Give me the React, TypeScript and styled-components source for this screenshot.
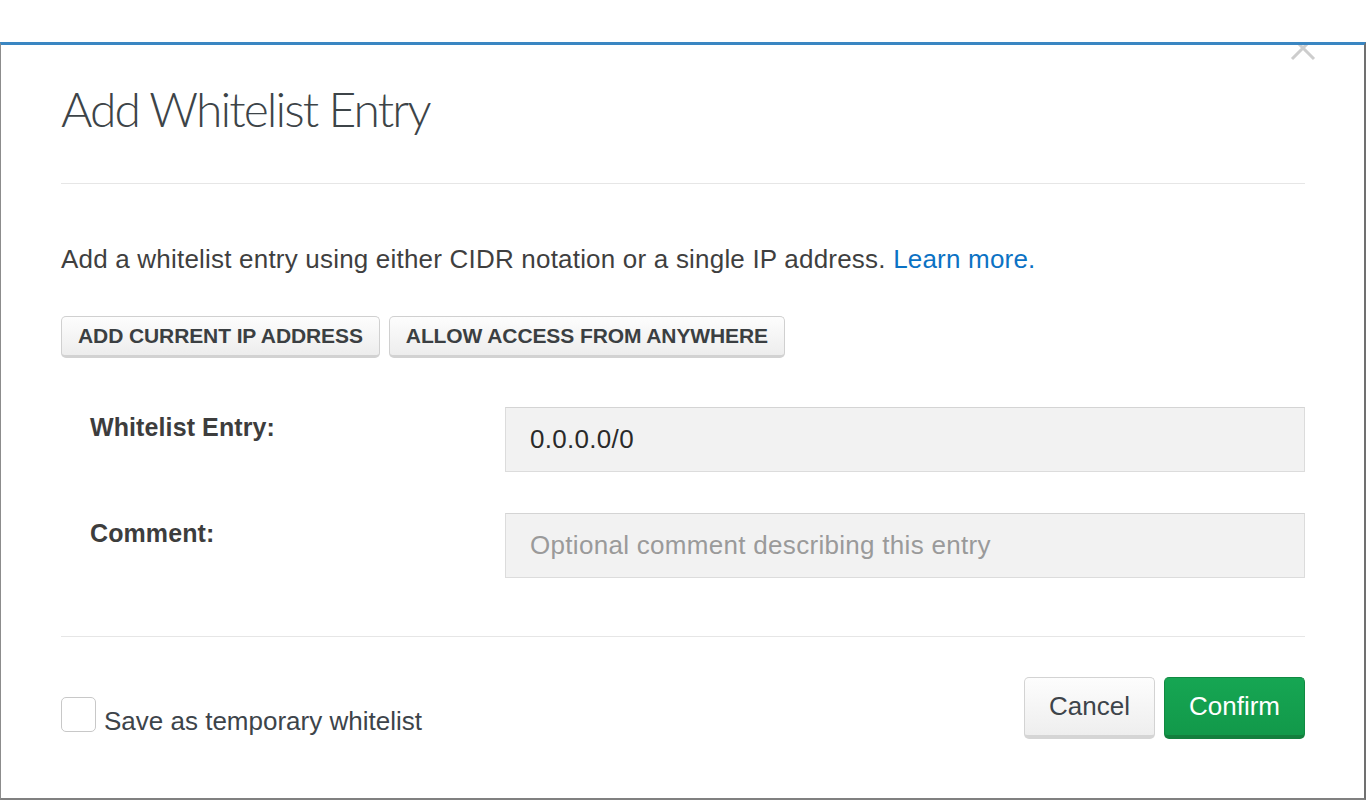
import React, { useState } from 'react'
import styled, { createGlobalStyle } from 'styled-components'

const GlobalStyle = createGlobalStyle`
  html, body {
    margin: 0;
    padding: 0;
    background: #ffffff;
  }
  body {
    font-family: "Liberation Sans", Arial, sans-serif;
    color: #333;
  }
  * {
    box-sizing: border-box;
  }
`

const Page = styled.div`
  width: 1366px;
  height: 801px;
  overflow: hidden;
  padding-top: 42px;
  background: #ffffff;
`

const Modal = styled.div`
  position: relative;
  height: 758px;
  background: #fff;
  border-top: 3px solid #3a86c2;
  border-left: 1px solid #8c8c8c;
  border-right: 2px solid #707070;
  border-bottom: 2px solid #808080;
  padding: 0 59px 0 60px;
  overflow: hidden;
`

const CloseButton = styled.button`
  position: absolute;
  top: -10px;
  right: 48px;
  width: 26px;
  height: 26px;
  padding: 0;
  border: none;
  background: transparent;
  cursor: pointer;
`

const Header = styled.div`
  padding-top: 34px;
  height: 139px;
  border-bottom: 1px solid #e6e6e6;
`

const Title = styled.h2`
  margin: 0;
  font-family: "Lato", "Liberation Sans", sans-serif;
  font-weight: 300;
  font-size: 48px;
  line-height: 60px;
  color: #3d4448;
  letter-spacing: -1.9px;
`

const Body = styled.div`
  padding-top: 59px;
  height: 453px;
  border-bottom: 1px solid #e6e6e6;
`

const Intro = styled.p`
  margin: 0;
  font-size: 26px;
  line-height: 32px;
  color: #3f3f3f;
  letter-spacing: 0.2px;
`

const Link = styled.a`
  color: #0b72c4;
  text-decoration: none;
`

const ButtonRow = styled.div`
  display: flex;
  gap: 9px;
  margin-top: 41px;
`

const PresetButton = styled.button`
  height: 42px;
  padding: 0 16px;
  font-family: "Liberation Sans", Arial, sans-serif;
  font-weight: 700;
  font-size: 21px;
  letter-spacing: -0.1px;
  color: #3b3f42;
  text-transform: uppercase;
  background: linear-gradient(#fdfdfd, #ededed);
  border: 1px solid #d0d0d0;
  border-bottom: 3px solid #d2d2d2;
  border-radius: 5px;
  cursor: pointer;
`

const FormRow = styled.div<{ $first?: boolean }>`
  display: flex;
  align-items: flex-start;
  margin-top: ${p => p.$first ? '49px' : '41px'};
`

const Label = styled.label`
  width: 444px;
  padding: 4px 0 0 29px;
  font-weight: 700;
  font-size: 25px;
  line-height: 32px;
  color: #3d3d3d;
  letter-spacing: 0.1px;
`

const TextInput = styled.input`
  flex: 1;
  height: 65px;
  padding: 0 24px;
  font-family: "Liberation Sans", Arial, sans-serif;
  font-size: 26px;
  letter-spacing: 0.3px;
  color: #2a2a2a;
  background: #f2f2f2;
  border: 1px solid #dcdcdc;
  border-top-color: #d4d4d4;
  border-radius: 0;
  outline: none;
  &::placeholder {
    color: #9a9a9a;
  }
`

const Footer = styled.div`
  display: flex;
  align-items: center;
  justify-content: space-between;
  padding-top: 40px;
`

const CheckLabel = styled.label`
  display: flex;
  align-items: flex-end;
  gap: 8px;
  padding-top: 18px;
  font-size: 26px;
  color: #3d444a;
  cursor: pointer;
`

const Box = styled.span<{ $on: boolean }>`
  width: 35px;
  height: 35px;
  border: 1px solid #c8c8c8;
  border-radius: 5px;
  background: ${p => p.$on ? '#3a86c2' : '#fff'};
  margin-bottom: 5px;
`

const Actions = styled.div`
  display: flex;
  gap: 9px;
`

const ActionButton = styled.button<{ $primary?: boolean }>`
  height: 62px;
  padding: 0 24px;
  font-family: "Liberation Sans", Arial, sans-serif;
  font-size: 26px;
  color: ${p => p.$primary ? '#fff' : '#3d444a'};
  background: ${p => p.$primary
    ? 'linear-gradient(#16a653, #12994a)'
    : 'linear-gradient(#fdfdfd, #eeeeee)'};
  border: 1px solid ${p => p.$primary ? '#118a42' : '#d3d3d3'};
  border-bottom: 4px solid ${p => p.$primary ? '#137f3d' : '#d5d5d5'};
  border-radius: 5px;
  cursor: pointer;
`

const CloseIcon = () => (
  <svg width="26" height="26" viewBox="0 0 26 26">
    <path d="M2 24 L24 2 M2 2 L24 24" stroke="#cdcdcd" strokeWidth="3" fill="none" />
  </svg>
)

export default function App() {
  const [entry, setEntry] = useState('0.0.0.0/0')
  const [comment, setComment] = useState('')
  const [temporary, setTemporary] = useState(false)

  return (
    <Page>
      <GlobalStyle />
      <Modal>
        <CloseButton aria-label="Close">
          <CloseIcon />
        </CloseButton>
        <Header>
          <Title>Add Whitelist Entry</Title>
        </Header>
        <Body>
          <Intro>
            Add a whitelist entry using either CIDR notation or a single IP address.{' '}
            <Link href="#">Learn more.</Link>
          </Intro>
          <ButtonRow>
            <PresetButton>Add Current IP Address</PresetButton>
            <PresetButton onClick={() => setEntry('0.0.0.0/0')}>Allow Access From Anywhere</PresetButton>
          </ButtonRow>
          <FormRow $first>
            <Label>Whitelist Entry:</Label>
            <TextInput value={entry} onChange={e => setEntry(e.target.value)} />
          </FormRow>
          <FormRow>
            <Label>Comment:</Label>
            <TextInput
              value={comment}
              placeholder="Optional comment describing this entry"
              onChange={e => setComment(e.target.value)}
            />
          </FormRow>
        </Body>
        <Footer>
          <CheckLabel onClick={() => setTemporary(!temporary)}>
            <Box $on={temporary} />
            Save as temporary whitelist
          </CheckLabel>
          <Actions>
            <ActionButton>Cancel</ActionButton>
            <ActionButton $primary>Confirm</ActionButton>
          </Actions>
        </Footer>
      </Modal>
    </Page>
  )
}
